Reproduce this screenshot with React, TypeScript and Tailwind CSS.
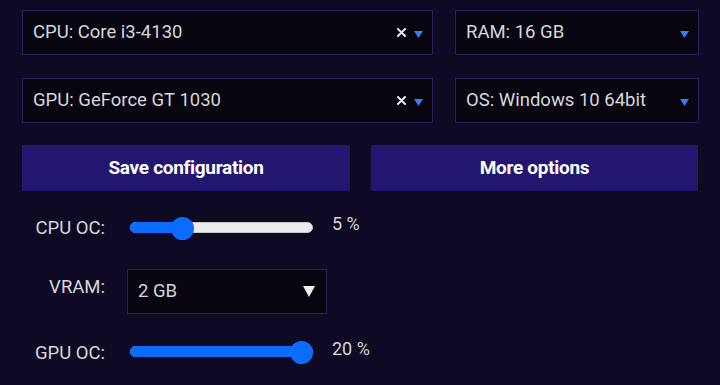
import React from "react";

const font = { fontFamily: "Roboto, 'Liberation Sans', sans-serif" };

function BlueTri() {
  return (
    <svg width="9" height="7" viewBox="0 0 9 7" className="block">
      <path d="M0 0 H9 L4.5 7 Z" fill="#3b7bf0" />
    </svg>
  );
}

function Cross() {
  return (
    <svg width="9" height="9" viewBox="0 0 9 9" className="block">
      <path d="M1 1 L8 8 M8 1 L1 8" stroke="#e8e8ee" strokeWidth="2" strokeLinecap="round" />
    </svg>
  );
}

function Select({ label, clear }: { label: string; clear?: boolean }) {
  return (
    <div className="h-[45px] flex items-center justify-between bg-[#07050f] border border-[#2a1f5c] pl-[10px] pr-[9px]">
      <span className="text-[18.5px] text-[#d6d6dc]">{label}</span>
      <div className="flex items-center gap-[8px]">
        {clear && <Cross />}
        <div className="pt-[3px]"><BlueTri /></div>
      </div>
    </div>
  );
}

function Slider({ fill }: { fill: number }) {
  return (
    <div className="relative w-[183px] h-[11px] rounded-full bg-[#ececec] border border-[#c8c8c8]">
      <div className="absolute left-[-1px] top-[-1px] h-[11px] rounded-full bg-[#0b6cff]" style={{ width: fill }} />
      <div
        className="absolute top-[-6px] w-[23px] h-[23px] rounded-full bg-[#0b6cff]"
        style={{ left: fill - 23 }}
      />
    </div>
  );
}

export default function App() {
  return (
    <div className="w-[720px] h-[385px] bg-[#0e0a24] overflow-hidden" style={font}>
      <div className="pl-[22px] pr-[21px] pt-[10px]">
        <div className="grid grid-cols-[411px_244px] gap-x-[22px] gap-y-[23px]">
          <Select label="CPU: Core i3-4130" clear />
          <Select label="RAM: 16 GB" />
          <Select label="GPU: GeForce GT 1030" clear />
          <Select label="OS: Windows 10 64bit" />
        </div>
        <div className="mt-[22px] grid grid-cols-[328px_327px] gap-x-[21px]">
          <button className="h-[46px] bg-[#231670] text-white font-bold text-[19px] tracking-[-0.3px] shadow-[1px_1px_0_#07050f]">
            Save configuration
          </button>
          <button className="h-[46px] bg-[#231670] text-white font-bold text-[19px] tracking-[-0.3px] shadow-[1px_1px_0_#07050f]">
            More options
          </button>
        </div>
        <div className="mt-[24px] flex items-center h-[24px]">
          <div className="w-[83px] text-right text-[18.5px] text-[#d6d6dc] pt-[3px]">CPU OC:</div>
          <div className="ml-[25px]"><Slider fill={63} /></div>
          <div className="ml-[19px] text-[18px] text-[#d6d6dc] -mt-[7px]">5 %</div>
        </div>
        <div className="mt-[30px] flex items-center">
          <div className="w-[83px] text-right text-[18.5px] text-[#d6d6dc] -mt-[7px]">VRAM:</div>
          <div className="ml-[22px] w-[200px] h-[45px] bg-[#07050f] border border-[#2a1f5c] flex items-center justify-between pl-[10px] pr-[11px]">
            <span className="text-[18.5px] text-[#d6d6dc]">2 GB</span>
            <svg width="12" height="11" viewBox="0 0 12 11" className="block">
              <path d="M0 0 H12 L6 11 Z" fill="#f0f0f0" />
            </svg>
          </div>
        </div>
        <div className="mt-[25px] flex items-center h-[24px]">
          <div className="w-[83px] text-right text-[18.5px] text-[#d6d6dc] pt-[5px]">GPU OC:</div>
          <div className="ml-[25px]"><Slider fill={182} /></div>
          <div className="ml-[19px] text-[18px] text-[#d6d6dc] -mt-[5px]">20 %</div>
        </div>
      </div>
    </div>
  );
}
